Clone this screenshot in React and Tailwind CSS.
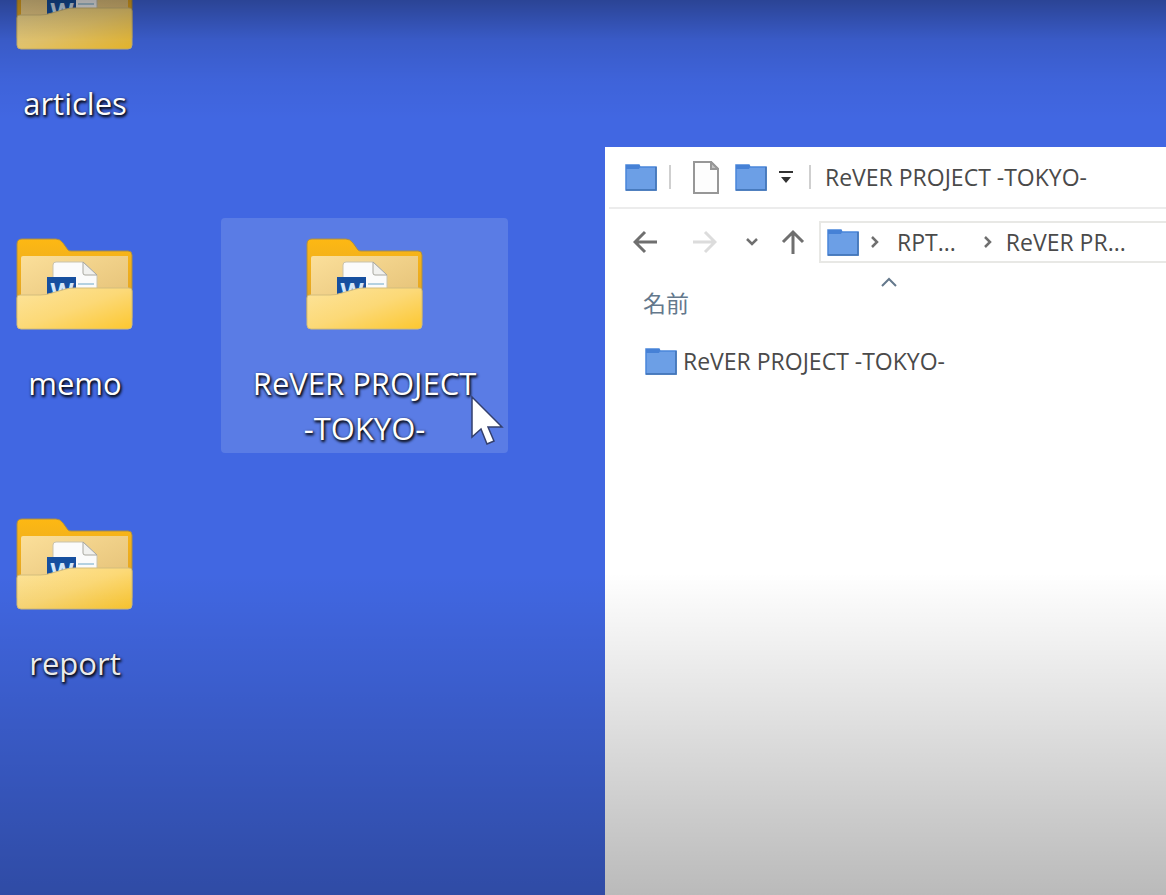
import React, { useState } from "react";

const desktopColumns = [
  { width: "w-[150px]", items: ["articles", "memo", "report"] },
  { width: "w-[287px]", items: [null, "ReVER PROJECT -TOKYO-"] },
];

function WordFolderIcon() {
  return (
    <svg viewBox="0 0 118 92" className="w-[118px] h-[92px] shrink-0" aria-hidden="true">
      <defs>
        <linearGradient id="folder-back" x1="0" y1="0" x2="0" y2="1">
          <stop offset="0" stopColor="#fdb813" />
          <stop offset="1" stopColor="#d99f2c" />
        </linearGradient>
        <linearGradient id="folder-inner" x1="0" y1="0" x2="1" y2="1">
          <stop offset="0" stopColor="#fbdf9a" />
          <stop offset="1" stopColor="#e3bf74" />
        </linearGradient>
        <linearGradient id="folder-front" x1="0" y1="0" x2="1" y2="1">
          <stop offset="0" stopColor="#fde49c" />
          <stop offset="0.5" stopColor="#fcd977" />
          <stop offset="1" stopColor="#fcc72f" />
        </linearGradient>
      </defs>
      <path d="M1 6Q1 1 6 1H40Q44 1 47 5L52 12Q53 13 55 13H112Q116 13 116 17V80H1Z" fill="url(#folder-back)" stroke="#a98d4a" strokeWidth="1" />
      <path d="M5 20Q5 18 7 18H112V70H5Z" fill="url(#folder-inner)" />
      <path d="M37 27Q37 24 40 24H67L81 37V66H37Z" fill="#fbfbfb" stroke="#c9c3ae" strokeWidth="1" />
      <path d="M67 24V35Q67 37 69 37H81Z" fill="#f1f1ef" stroke="#a8a7a0" strokeWidth="1" />
      <path d="M62 46H78" stroke="#9cc3d8" strokeWidth="1.5" />
      <rect x="31" y="39" width="29" height="26" fill="#164f9f" />
      <text x="46" y="62" textAnchor="middle" fontFamily="Open Sans, sans-serif" fontSize="24" fontWeight="700" fill="#d3e6f8">W</text>
      <path d="M1 60Q1 57 4 57H24Q30 57 36 55L50 51Q54 50 59 50H113Q116 50 116 53V87Q116 91 112 91H5Q1 91 1 87Z" fill="url(#folder-front)" stroke="#d3bd7c" strokeWidth="1" />
    </svg>
  );
}

function BlueFolder() {
  return (
    <svg viewBox="0 0 32 27" className="w-8 h-[27px] shrink-0" aria-hidden="true">
      <path d="M1 1H14L15 3H31V26H1Z" fill="#6c9fe6" stroke="#4a86da" strokeWidth="1.5" />
      <path d="M1 1H14L15 3L14 5H1Z" fill="#4681d6" />
      <path d="M31 3V26H1" fill="none" stroke="#4474b4" strokeWidth="1.5" />
    </svg>
  );
}

function PageIcon() {
  return (
    <svg viewBox="0 0 26 33" className="w-[26px] h-[33px]" fill="#fdfdfd" stroke="#979797" strokeWidth="2" aria-hidden="true">
      <path d="M1 1H18L25 8V32H1Z" />
      <path d="M18 1V8H25Z" fill="#c4c4c4" />
    </svg>
  );
}

function Arrow({ direction }) {
  const paths = {
    back: "M12 2L2 12L12 22M2 12H24",
    forward: "M14 2L24 12L14 22M24 12H2",
    up: "M2 12L12 2L22 12M12 2V24",
  };
  return (
    <svg viewBox="0 -1 26 26" className="w-[26px] h-[26px]" fill="none" stroke="currentColor" strokeWidth="3" aria-hidden="true">
      <path d={paths[direction]} />
    </svg>
  );
}

function Chevron({ direction }) {
  const paths = {
    down: "M2 4L7 9L12 4",
    up: "M1 11L8 4L15 11",
    right: "M5 2L10 7L5 12",
  };
  return (
    <svg
      viewBox={direction === "up" ? "0 0 16 14" : "0 0 14 14"}
      className={direction === "up" ? "w-4 h-[14px]" : "w-[14px] h-[14px]"}
      fill="none"
      stroke="currentColor"
      strokeWidth={direction === "up" ? 2 : 2.5}
      aria-hidden="true"
    >
      <path d={paths[direction]} />
    </svg>
  );
}

function DesktopItem({ name, selected, onSelect }) {
  return (
    <button
      type="button"
      onClick={onSelect}
      className={`flex flex-col items-center w-full h-[235px] pt-5 rounded-sm ${selected ? "bg-[#5a7ce5]" : ""}`}
    >
      <WordFolderIcon />
      <span className="mt-[31px] px-6 text-[31px] leading-[45px] text-white text-center [text-shadow:1px_2px_3px_rgba(0,0,0,0.9),1px_1px_3px_rgba(0,0,0,0.8)]">
        {name}
      </span>
    </button>
  );
}

function ExplorerWindow() {
  return (
    <section aria-label="ReVER PROJECT -TOKYO-" className="flex-1 min-w-0 mt-[147px] bg-white text-[23px] leading-8 text-[#4a4a4a] overflow-hidden">
      <header className="flex items-center h-[62px] ml-1 pl-4 border-b-2 border-[#ececec] whitespace-nowrap">
        <BlueFolder />
        <span className="w-[2px] h-6 ml-3 bg-[#cfcfcf]" />
        <button type="button" aria-label="Properties" className="ml-[22px]"><PageIcon /></button>
        <button type="button" aria-label="New folder" className="ml-4"><BlueFolder /></button>
        <button type="button" aria-label="Customize toolbar" className="ml-3">
          <svg viewBox="0 0 14 12" className="w-[14px] h-3" fill="#333" aria-hidden="true">
            <path d="M0 0H14V2H0ZM2 6H12L7 12Z" />
          </svg>
        </button>
        <span className="w-[2px] h-6 ml-4 bg-[#cfcfcf]" />
        <h1 className="ml-[14px]">ReVER PROJECT -TOKYO-</h1>
      </header>

      <div className="flex items-center h-[66px] pl-7 text-[#6f6f6f]">
        <button type="button" aria-label="Back"><Arrow direction="back" /></button>
        <button type="button" aria-label="Forward" className="ml-8 text-[#dcdcdc]"><Arrow direction="forward" /></button>
        <button type="button" aria-label="Recent locations" className="ml-7"><Chevron direction="down" /></button>
        <button type="button" aria-label="Up" className="ml-[22px]"><Arrow direction="up" /></button>
        <nav aria-label="Address" className="flex flex-1 items-center h-[42px] ml-3 pl-[6px] border-2 border-r-0 border-[#e8e8e5] whitespace-nowrap">
          <BlueFolder />
          <span className="ml-2"><Chevron direction="right" /></span>
          <a href="#rpt" className="ml-4 text-[#4a4a4a]">RPT...</a>
          <span className="ml-6"><Chevron direction="right" /></span>
          <a href="#rever" className="ml-3 text-[#4a4a4a]">ReVER PR...</a>
        </nav>
      </div>

      <table className="ml-6">
        <thead>
          <tr>
            <th scope="col" className="w-[520px] p-0 font-normal text-left text-[#64788c]">
              <span className="flex justify-center"><Chevron direction="up" /></span>
              <span className="block pl-[14px] leading-7">名前</span>
            </th>
          </tr>
        </thead>
        <tbody>
          <tr>
            <td className="pt-7 pl-4">
              <a href="#rever" className="flex items-center gap-[6px]">
                <BlueFolder />
                ReVER PROJECT -TOKYO-
              </a>
            </td>
          </tr>
        </tbody>
      </table>
    </section>
  );
}

function App() {
  const [selected, setSelected] = useState("ReVER PROJECT -TOKYO-");

  return (
    <main className="relative flex h-screen overflow-hidden bg-[#4167e2] font-['Open_Sans','Noto_Sans_CJK_JP',sans-serif]">
      <div className="flex gap-[71px] w-[605px] shrink-0 -mt-[62px]">
        {desktopColumns.map((column, c) => (
          <div key={c} className={`flex flex-col gap-[45px] ${column.width}`}>
            {column.items.map((name, i) =>
              name ? (
                <DesktopItem key={name} name={name} selected={selected === name} onSelect={() => setSelected(name)} />
              ) : (
                <div key={i} className="h-[235px]" />
              )
            )}
          </div>
        ))}
      </div>

      <ExplorerWindow />

      <svg viewBox="0 0 34 50" className="absolute left-[470px] top-[395px] w-[34px] h-[50px]" aria-hidden="true">
        <path d="M2 2V42L11 34L17 49L24 46L18 32H32Z" fill="#fff" stroke="#34406e" strokeWidth="1.5" />
      </svg>

      {/* top and bottom shading over the whole screen */}
      <div className="absolute inset-0 pointer-events-none bg-[linear-gradient(to_bottom,rgba(0,0,0,0.34)_0px,rgba(0,0,0,0.12)_40px,rgba(0,0,0,0.04)_80px,transparent_120px,transparent_64%,rgba(0,0,0,0.27)_100%)]" />
    </main>
  );
}

export default App;
